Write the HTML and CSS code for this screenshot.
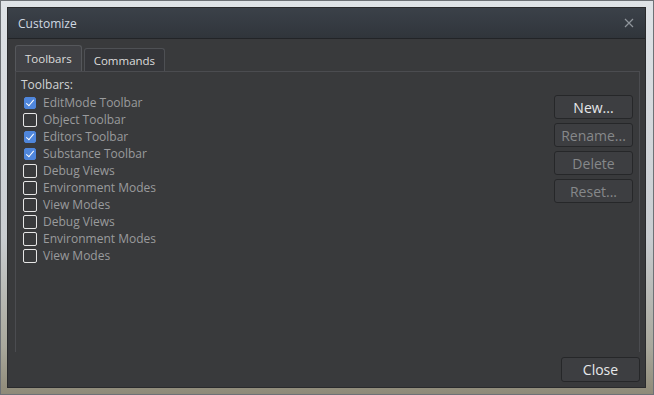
FILE: index.html
```html
<!DOCTYPE html>
<html>
<head>
    <title>Customize</title>
    <link rel="stylesheet" href="styles.css">
</head>
<body>
    <div class="frame">
        <div class="window">
            <div class="titlebar">
                <span class="title">Customize</span>
                <svg class="close-x" width="10" height="10" viewBox="0 0 10 10">
                    <path d="M1 1 L9 9 M9 1 L1 9" stroke="#8f959b" stroke-width="1.2" fill="none"/>
                </svg>
            </div>
            <div class="content">
                <div class="tabs">
                    <div class="tab active">Toolbars</div>
                    <div class="tab">Commands</div>
                </div>
                <div class="pane">
                    <div class="list">
                        <div class="list-label">Toolbars:</div>
                        <label class="item"><span class="box checked"></span>EditMode Toolbar</label>
                        <label class="item"><span class="box"></span>Object Toolbar</label>
                        <label class="item"><span class="box checked"></span>Editors Toolbar</label>
                        <label class="item"><span class="box checked"></span>Substance Toolbar</label>
                        <label class="item"><span class="box"></span>Debug Views</label>
                        <label class="item"><span class="box"></span>Environment Modes</label>
                        <label class="item"><span class="box"></span>View Modes</label>
                        <label class="item"><span class="box"></span>Debug Views</label>
                        <label class="item"><span class="box"></span>Environment Modes</label>
                        <label class="item"><span class="box"></span>View Modes</label>
                    </div>
                    <div class="actions">
                        <button class="btn">New...</button>
                        <button class="btn disabled">Rename...</button>
                        <button class="btn disabled">Delete</button>
                        <button class="btn disabled">Reset...</button>
                    </div>
                </div>
                <div class="footer">
                    <button class="btn close-btn">Close</button>
                </div>
            </div>
        </div>
    </div>
</body>
</html>
```

FILE: styles.css
```css
body {
    margin: 0;
    font-family: "Open Sans", "DejaVu Sans", sans-serif;
    font-size: 12px;
}

.frame {
    width: 654px;
    height: 395px;
    box-sizing: border-box;
    padding: 7px 8px 7px 7px;
    background: linear-gradient(to bottom, #dfe3e7 0%, #c9cdd1 60%, #a9a89c 88%, #8f8a78 100%);
    border: 1px solid #6d7176;
}

.window {
    height: 100%;
    display: flex;
    flex-direction: column;
    background-color: #393a3c;
    border: 1px solid #2a2b2d;
    margin: -1px;
}

.titlebar {
    height: 30px;
    display: flex;
    align-items: center;
    justify-content: space-between;
    padding: 0 10px 0 10px;
    background: linear-gradient(to bottom, #3b4149, #30353b);
    border-bottom: 1px solid #222427;
}

.title {
    color: #cfd8e2;
    font-size: 12px;
}

.close-x {
    margin-right: 1px;
}

.content {
    flex: 1;
    display: flex;
    flex-direction: column;
    padding: 6px 5px 5px 7px;
}

.tabs {
    display: flex;
    align-items: flex-end;
    gap: 2px;
    height: 26px;
}

.tab {
    height: 22px;
    padding: 0 9px;
    display: flex;
    align-items: center;
    font-size: 11.5px;
    color: #dcdcdc;
    background-color: #35363a;
    border: 1px solid #4e5054;
    border-bottom: none;
    border-radius: 3px 3px 0 0;
}

.tab.active {
    height: 25px;
    background-color: #404145;
    border-color: #55575b;
}

.pane {
    flex: 1;
    display: flex;
    justify-content: space-between;
    padding: 5px 6px 0 5px;
    border: 1px solid #4b4c50;
    border-bottom: none;
    margin-bottom: 5px;
}

.list-label {
    color: #d2d4d6;
    height: 16px;
    line-height: 16px;
    margin-bottom: 1px;
}

.item {
    display: flex;
    align-items: center;
    height: 17px;
    color: #9a9b9d;
    padding-left: 2px;
}

.box {
    width: 14px;
    height: 14px;
    box-sizing: border-box;
    border: 1px solid #e6e6e6;
    border-radius: 2px;
    margin-right: 6px;
    position: relative;
}

.box.checked {
    width: 12px;
    height: 12px;
    margin: 0 7px 0 1px;
    border-color: #4f86db;
    background-color: #4f86db;
}

.box.checked::after {
    content: "";
    position: absolute;
    left: 3px;
    top: 0px;
    width: 3px;
    height: 7px;
    border: solid #ffffff;
    border-width: 0 1.5px 1.5px 0;
    transform: rotate(40deg);
}

.actions {
    display: flex;
    flex-direction: column;
    gap: 4px;
    padding-top: 18px;
}

.btn {
    width: 79px;
    height: 24px;
    font-family: "Open Sans", "DejaVu Sans", sans-serif;
    font-size: 14px;
    color: #e6e8ea;
    background-color: #3d3e41;
    border: 1px solid #262729;
    border-radius: 3px;
    padding: 0;
}

.btn.disabled {
    color: #86888a;
}

.footer {
    display: flex;
    justify-content: flex-end;
}

.close-btn {
    width: 79px;
    height: 25px;
}
```
